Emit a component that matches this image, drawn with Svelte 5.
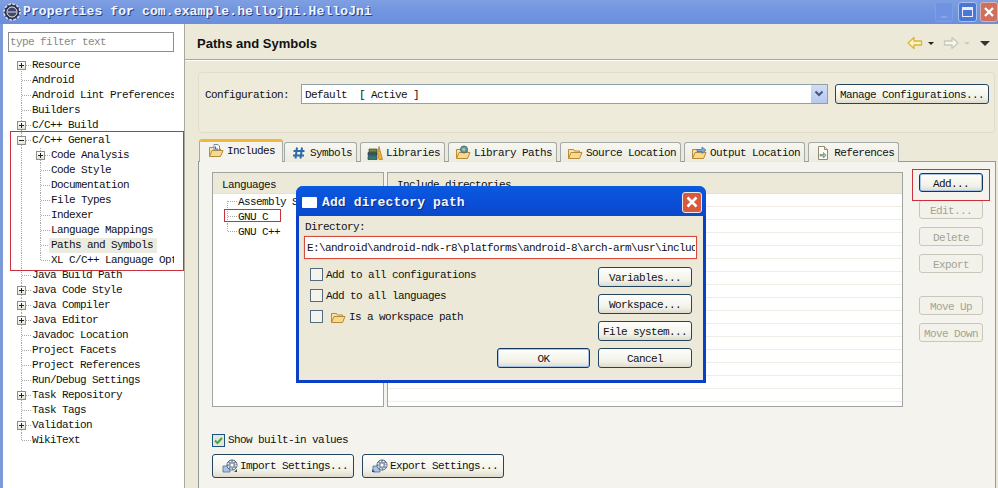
<script lang="ts">
	const tree = [
		{ label: 'Resource', level: 0, exp: '+', first: true },
		{ label: 'Android', level: 0 },
		{ label: 'Android Lint Preferences', level: 0 },
		{ label: 'Builders', level: 0 },
		{ label: 'C/C++ Build', level: 0, exp: '+' },
		{ label: 'C/C++ General', level: 0, exp: '-' },
		{ label: 'Code Analysis', level: 1, exp: '+' },
		{ label: 'Code Style', level: 1 },
		{ label: 'Documentation', level: 1 },
		{ label: 'File Types', level: 1 },
		{ label: 'Indexer', level: 1 },
		{ label: 'Language Mappings', level: 1 },
		{ label: 'Paths and Symbols', level: 1, selected: true },
		{ label: 'XL C/C++ Language Options', level: 1, last: true },
		{ label: 'Java Build Path', level: 0 },
		{ label: 'Java Code Style', level: 0, exp: '+' },
		{ label: 'Java Compiler', level: 0, exp: '+' },
		{ label: 'Java Editor', level: 0, exp: '+' },
		{ label: 'Javadoc Location', level: 0 },
		{ label: 'Project Facets', level: 0 },
		{ label: 'Project References', level: 0 },
		{ label: 'Run/Debug Settings', level: 0 },
		{ label: 'Task Repository', level: 0, exp: '+' },
		{ label: 'Task Tags', level: 0 },
		{ label: 'Validation', level: 0, exp: '+' },
		{ label: 'WikiText', level: 0, last: true }
	];

	const tabs = [
		{ label: 'Includes', icon: 'folder', active: true },
		{ label: 'Symbols', icon: 'hash' },
		{ label: 'Libraries', icon: 'books' },
		{ label: 'Library Paths', icon: 'globe' },
		{ label: 'Source Location', icon: 'open' },
		{ label: 'Output Location', icon: 'out' },
		{ label: 'References', icon: 'doc' }
	];

	const languages = ['Assembly Source', 'GNU C', 'GNU C++'];
</script>

{#snippet folder(kind)}
	<svg class="ico" viewBox="0 0 16 16" width="16" height="16">
		<path d="M1.5 13.5V4.5h5l1 1.5h5v2" fill="#f7e3a6" stroke="#b58a3a" />
		<path d="M1.5 13.5l2.5-6h11l-2.5 6z" fill="#f9d98a" stroke="#b58a3a" stroke-linejoin="round" />
		{#if kind === 'folder'}
			<path d="M6 1.5h4l1.5 1.5v4H6z" fill="#fff" stroke="#7d8aa5" />
			<path d="M7.5 6V3.5M7.5 6H10" stroke="#4a5f8a" />
		{:else if kind === 'globe'}
			<circle cx="9" cy="4.5" r="3.5" fill="#6f9a8f" stroke="#4f6a78" />
			<path d="M7 3.5h3v2H8z" fill="#b9d6a8" />
		{:else if kind === 'out'}
			<path d="M6 4.5h5V2l4 3.2-4 3.2V6.5H6z" fill="#7fb0df" stroke="#41709e" stroke-width=".8" />
		{/if}
	</svg>
{/snippet}

{#snippet tabIcon(name)}
	{#if name === 'hash'}
		<svg class="ico" viewBox="0 0 16 16" width="16" height="16">
			<path d="M6 2.5L4.500 13.500M11 2.500L9.500 13.500M2.500 6h11M2 10.500h11" stroke="#2d6aa8" stroke-width="2" fill="none" />
		</svg>
	{:else if name === 'books'}
		<svg class="ico" viewBox="0 0 16 16" width="16" height="16">
			<path d="M1 11.500h9v3H1z" fill="#2f7f6f" stroke="#23404a" stroke-width=".7" />
			<path d="M1 7.500h9v3H1z" fill="#35506e" stroke="#23404a" stroke-width=".7" />
			<path d="M2 4h8v3H2z" fill="#6f8f3a" stroke="#3a4a20" stroke-width=".7" />
			<path d="M12 1.500l3.500 13h-3.500l-1.500-6z" fill="#eeb23c" stroke="#a8761e" stroke-width=".7" />
		</svg>
	{:else if name === 'doc'}
		<svg class="ico" viewBox="0 0 16 16" width="16" height="16">
			<path d="M3.500 1.500h6l3 3v10h-9z" fill="#fdfbf2" stroke="#8f8a70" />
			<path d="M9.500 1.500v3h3" fill="#e8e2c8" stroke="#8f8a70" />
			<path d="M5 9.500h3.500V7.500L11 10.200 8.500 13v-2H5z" fill="#9fc4a0" stroke="#5e8a78" stroke-width=".7" />
		</svg>
	{:else}
		{@render folder(name)}
	{/if}
{/snippet}

{#snippet gearDoc(out)}
	<svg class="ico" viewBox="0 0 18 16" width="18" height="16">
		<path d="M2 8h7v6H2z" fill="#a9c4e6" stroke="#4a6fa0" stroke-width=".8" />
		<circle cx="11" cy="7" r="5" fill="#8a97ad" stroke="#47566e" />
		<circle cx="11" cy="7" r="4" fill="none" stroke="#e8ecf2" stroke-width="1.4" stroke-dasharray="1.6 1.6" />
		<circle cx="11" cy="7" r="1.5" fill="#fff" />
		{#if out}
			<path d="M1 11l3 3H1z" fill="#3a4e6a" />
		{:else}
			<path d="M16 11v3h-3z" fill="#3a4e6a" />
		{/if}
	</svg>
{/snippet}

<div class="win">
	<header class="titlebar">
		<svg class="app" viewBox="0 0 18 18" width="18" height="18">
			<circle cx="9" cy="9" r="8" fill="#2f3350" stroke="#d8dce8" stroke-width="1.6" stroke-dasharray="2.6 1.6" />
			<circle cx="9" cy="9" r="5" fill="#41466a" stroke="#e8eaf2" />
			<path d="M5 9h8" stroke="#d9dbe8" />
		</svg>
		<span class="title">Properties for com.example.hellojni.HelloJni</span>
		<span class="wbtn min"><i></i></span>
		<span class="wbtn max"><i></i></span>
		<span class="wbtn close">
			<svg viewBox="0 0 18 18" width="18" height="18"><path d="M4.500 4.500l9 9M13.500 4.500l-9 9" stroke="#fff" stroke-width="2.600" /></svg>
		</span>
	</header>

	<div class="body">
		<aside class="nav">
			<div class="filter">type filter text</div>
			<div class="tree">
				{#each tree as item}
					<div class="row">
						{#if item.level === 1}
							<span class="guide pass"></span>
						{/if}
						<span class="guide branch" class:last={item.last} class:first={item.first}>
							{#if item.exp}
								<span class="exp" class:plus={item.exp === '+'}></span>
							{/if}
						</span>
						<span class="label" class:selected={item.selected}>{item.label}</span>
					</div>
				{/each}
			</div>
		</aside>

		<main class="page">
			<div class="page-head">
				<h1>Paths and Symbols</h1>
				<div class="arrows">
					<svg viewBox="0 0 16 14" width="16" height="14"><path d="M1 7l6-5.500V5h7.500v4H7v3.500z" fill="#fdf3c0" stroke="#d9b53c" stroke-width="1.300" stroke-linejoin="round" /></svg>
					<span class="drop"></span>
					<svg class="fwd" viewBox="0 0 16 14" width="16" height="14"><path d="M15 7L9 1.500V5H1.500v4H9v3.500z" fill="#f6f5ee" stroke="#c9c8bc" stroke-width="1.300" stroke-linejoin="round" /></svg>
					<span class="drop dim"></span>
					<span class="drop big"></span>
				</div>
			</div>

			<section class="config">
				<span class="cfg-label">Configuration:</span>
				<div class="combo">
					<span class="combo-text">Default  [ Active ]</span>
					<span class="combo-btn">
						<svg viewBox="0 0 10 8" width="10" height="8"><path d="M1.500 1.500L5 5l3.500-3.500" fill="none" stroke="#44587e" stroke-width="2" /></svg>
					</span>
				</div>
				<button class="btn manage">Manage Configurations...</button>
			</section>

			<div class="tabs">
				{#each tabs as tab}
					<div class="tab" class:active={tab.active}>
						{@render tabIcon(tab.icon)}
						<span>{tab.label}</span>
					</div>
				{/each}
			</div>

			<section class="tab-body">
				<div class="columns">
					<div class="panel langs">
						<div class="panel-head">Languages</div>
						<div class="lang-list">
							{#each languages as lang, i}
								<div class="lang-row">
									<span class="guide branch" class:last={i === languages.length - 1} class:first={i === 0}></span>
									<span>{lang}</span>
								</div>
							{/each}
						</div>
					</div>
					<div class="panel incs">
						<div class="panel-head">Include directories</div>
						<div class="inc-lines"></div>
					</div>
					<div class="side">
						<button class="btn default">Add...</button>
						<button class="btn" disabled>Edit...</button>
						<button class="btn" disabled>Delete</button>
						<button class="btn" disabled>Export</button>
						<button class="btn gap" disabled>Move Up</button>
						<button class="btn" disabled>Move Down</button>
					</div>
				</div>

				<label class="builtin">
					<span class="check on">
						<svg viewBox="0 0 11 11" width="11" height="11"><path d="M2 5.500l2.500 2.500L9 3" fill="none" stroke="#3fa83f" stroke-width="2" /></svg>
					</span>
					Show built-in values
				</label>
				<div class="settings">
					<button class="btn setting">{@render gearDoc(false)}Import Settings...</button>
					<button class="btn setting">{@render gearDoc(true)}Export Settings...</button>
				</div>
			</section>
		</main>
	</div>

	<div class="dialog">
		<div class="dlg-title">
			<span class="dlg-ico"></span>
			<span class="title">Add directory path</span>
			<span class="wbtn close dlg-close">
				<svg viewBox="0 0 18 18" width="18" height="18"><path d="M4.500 4.500l9 9M13.500 4.500l-9 9" stroke="#fff" stroke-width="2.600" /></svg>
			</span>
		</div>
		<div class="dlg-body">
			<div class="dlg-label">Directory:</div>
			<div class="dlg-input"><span>E:\android\android-ndk-r8\platforms\android-8\arch-arm\usr\include</span></div>
			<div class="dlg-grid">
				<div class="dlg-checks">
					<div class="dlg-check"><span class="check"></span>Add to all configurations</div>
					<div class="dlg-check"><span class="check"></span>Add to all languages</div>
					<div class="dlg-check">
						<span class="check"></span>
						<span class="dlg-folder">{@render folder('open')}</span>
						Is a workspace path
					</div>
				</div>
				<div class="dlg-btns">
					<button class="btn">Variables...</button>
					<button class="btn">Workspace...</button>
					<button class="btn">File system...</button>
				</div>
			</div>
			<div class="dlg-foot">
				<button class="btn default ok">OK</button>
				<button class="btn cancel">Cancel</button>
			</div>
		</div>
	</div>

	<!-- red boxes somebody drew on the screenshot -->
	<span class="mark mark-tree"></span>
	<span class="mark mark-gnu"></span>
	<span class="mark mark-add"></span>
</div>

<style>
	:global(body) {
		margin: 0;
	}

	.win {
		position: relative;
		width: 998px;
		height: 488px;
		overflow: hidden;
		display: flex;
		flex-direction: column;
		background: #ece9d8;
		font: 11px/14px 'Liberation Mono', monospace;
		letter-spacing: -0.6px;
		color: #111;
	}

	.titlebar {
		flex: none;
		height: 24px;
		display: flex;
		align-items: center;
		padding-left: 3px;
		background: linear-gradient(#7f9fe2, #7195e0 45%, #6b8fdb);
	}

	.app {
		margin-right: 2px;
	}

	.title {
		font-size: 13px;
		font-weight: bold;
		letter-spacing: 0.13px;
		color: #f2f5fc;
		text-shadow: 1px 1px 0 #24408a;
		white-space: nowrap;
	}

	.titlebar .title {
		flex: 1;
	}

	.wbtn {
		width: 18px;
		height: 20px;
		border-radius: 3px;
		display: flex;
		align-items: center;
		justify-content: center;
		margin-right: 3px;
		box-sizing: border-box;
		border: 1px solid #a9bfec;
	}

	.min {
		background: #6f93e0;
		border-color: #7d9fe6;
		margin-right: 5px;
	}

	.min i {
		width: 6px;
		height: 2px;
		background: #86a4e4;
		margin-top: 10px;
	}

	.max {
		width: 19px;
		background: #4a76d6;
	}

	.max i {
		width: 11px;
		height: 10px;
		box-sizing: border-box;
		border: 1px solid #e8eefb;
		border-top-width: 3px;
	}

	.close {
		background: #cf6f5e;
		margin-right: 0;
		border-color: #d8b0b0;
	}

	.body {
		flex: 1;
		min-height: 0;
		display: flex;
	}

	.nav {
		flex: none;
		width: 182px;
		margin-left: 3px;
		box-sizing: border-box;
		padding: 8px 0 0 5px;
		background: #fff;
		border-right: 1px solid #a9a899;
		box-shadow: -3px 0 0 #7d9ad8;
	}

	.filter {
		width: 166px;
		height: 20px;
		box-sizing: border-box;
		border: 1px solid #8a8f8c;
		padding: 2px 1px;
		color: #888;
	}

	.tree {
		margin-top: 6px;
		margin-left: 9px;
		overflow: hidden;
		width: 157px;
	}

	.row {
		height: 15px;
		display: flex;
		align-items: center;
		white-space: nowrap;
	}

	.guide {
		flex: none;
		width: 15px;
		height: 100%;
		display: flex;
		align-items: center;
		background-repeat: no-repeat;
	}

	.pass {
		width: 19px;
		background-image: repeating-linear-gradient(#a8a8a8 0 1px, transparent 1px 2px);
		background-size: 1px 100%;
		background-position: 4px 0;
	}

	.branch {
		background-image:
			repeating-linear-gradient(#a8a8a8 0 1px, transparent 1px 2px),
			repeating-linear-gradient(90deg, #a8a8a8 0 1px, transparent 1px 2px);
		background-size:
			1px 100%,
			10px 1px;
		background-position:
			4px 0,
			5px 7px;
	}

	.branch.last {
		background-size:
			1px 8px,
			10px 1px;
	}

	.branch.first {
		background-size:
			1px 8px,
			10px 1px;
		background-position:
			4px 7px,
			5px 7px;
	}

	.exp {
		width: 9px;
		height: 9px;
		box-sizing: border-box;
		border: 1px solid #8a8f8c;
		background:
			linear-gradient(#222, #222) center / 5px 1px no-repeat,
			linear-gradient(#fff, #e6e3d4);
	}

	.exp.plus {
		background:
			linear-gradient(#222, #222) center / 5px 1px no-repeat,
			linear-gradient(#222, #222) center / 1px 5px no-repeat,
			linear-gradient(#fff, #e6e3d4);
	}

	.label {
		line-height: 15px;
	}

	.label.selected {
		background: #ecebe0;
		margin-left: -2px;
		padding: 0 4px 0 2px;
	}

	.page {
		flex: 1;
		min-width: 0;
		display: flex;
		flex-direction: column;
	}

	.page-head {
		flex: none;
		height: 36px;
		box-sizing: border-box;
		display: flex;
		align-items: center;
		justify-content: space-between;
		padding: 3px 0 0 12px;
		border-bottom: 1px solid #aca899;
		box-shadow: 0 1px 0 #fff;
	}

	h1 {
		margin: 0;
		font: bold 13px 'Liberation Sans', sans-serif;
		letter-spacing: 0;
		color: #111;
	}

	.arrows {
		display: flex;
		align-items: center;
		gap: 5px;
		padding-right: 8px;
	}

	.drop {
		border-top: 3px solid #222;
		border-left: 3px solid transparent;
		border-right: 3px solid transparent;
	}

	.fwd {
		margin-left: 4px;
	}

	.drop.dim {
		border-top-color: #cfcdbf;
	}

	.drop.big {
		margin-left: 5px;
		border-top: 5px solid #333;
		border-left: 5px solid transparent;
		border-right: 5px solid transparent;
	}

	.config {
		flex: none;
		height: 61px;
		box-sizing: border-box;
		margin: 12px 3px 0 13px;
		padding: 11px 0 0 6px;
		display: flex;
		align-items: flex-start;
		border: 1px solid #e0ddcb;
		border-radius: 4px;
		background: #eeebdb;
	}

	.cfg-label {
		width: 96px;
		line-height: 22px;
	}

	.combo {
		width: 527px;
		height: 20px;
		box-sizing: border-box;
		display: flex;
		align-items: center;
		justify-content: space-between;
		background: #fff;
		border: 1px solid #8ea0a8;
		padding: 0 0 0 3px;
		margin-right: 7px;
	}

	.combo-text {
		white-space: pre;
		padding-top: 2px;
	}

	.combo-btn {
		width: 16px;
		height: 18px;
		display: flex;
		align-items: center;
		justify-content: center;
		background: linear-gradient(#d2ddf7, #b6c8ef);
	}

	.btn {
		height: 20px;
		box-sizing: border-box;
		padding: 0;
		font: inherit;
		letter-spacing: inherit;
		color: #111;
		border: 1px solid #24455f;
		border-radius: 3px;
		background: linear-gradient(#fefefc, #f2f1e8 70%, #dedbcc);
	}

	.btn:disabled {
		color: #a4a392;
		border-color: #c9c7ba;
		background: #f3f2ea;
	}

	.btn.default {
		border-color: #12365c;
		box-shadow: inset 0 0 0 1px #a8c4e8;
	}

	.manage {
		width: 154px;
		padding-top: 2px;
	}

	.tabs {
		flex: none;
		display: flex;
		align-items: flex-end;
		gap: 3px;
		height: 23px;
		margin: 6px 0 -1px 14px;
		position: relative;
		z-index: 1;
	}

	.tab {
		height: 20px;
		box-sizing: border-box;
		display: flex;
		align-items: center;
		gap: 3px;
		padding: 0 4px 0 6px;
		background: linear-gradient(#f7f6f0, #ecebe0);
		border: 1px solid #a5a9a8;
		border-bottom: none;
		border-radius: 3px 3px 0 0;
		white-space: nowrap;
	}

	.tab.active {
		height: 23px;
		padding: 0 7px 2px 8px;
		margin-right: -2px;
		background: #f4f3ee;
		border-top: 3px solid #f0b83c;
	}

	.ico {
		flex: none;
	}

	.tab-body {
		flex: 1;
		min-height: 0;
		box-sizing: border-box;
		margin: 0 2px 0 13px;
		padding: 10px 0 0 13px;
		background: #f4f3ee;
		border: 1px solid #919b9c;
		border-bottom: none;
	}

	.columns {
		display: flex;
		height: 235px;
		gap: 3px;
	}

	.panel {
		box-sizing: border-box;
		height: 100%;
		display: flex;
		flex-direction: column;
		background: #fff;
		border: 1px solid #a0a49f;
	}

	.langs {
		width: 172px;
	}

	.incs {
		width: 516px;
	}

	.panel-head {
		flex: none;
		height: 20px;
		line-height: 24px;
		padding-left: 9px;
		background: #ece9d8;
		border-bottom: 1px solid #e4e1cf;
	}

	.lang-list {
		padding: 0 0 0 10px;
	}

	.lang-row {
		height: 15px;
		display: flex;
		align-items: center;
		white-space: nowrap;
	}

	.inc-lines {
		flex: 1;
		background: repeating-linear-gradient(#fff 0 12px, #efede6 12px 13px);
	}

	.side {
		display: flex;
		flex-direction: column;
		gap: 8px;
		width: 64px;
		margin-left: 13px;
		padding-top: 1px;
	}

	.side .btn {
		height: 19px;
		flex: none;
		padding-top: 2px;
	}

	.side .gap {
		margin-top: 15px;
	}

	.builtin {
		display: flex;
		align-items: center;
		gap: 3px;
		margin-top: 26px;
		height: 14px;
	}

	.check {
		flex: none;
		width: 13px;
		height: 13px;
		box-sizing: border-box;
		border: 1px solid #566a7e;
		background: #fff;
		display: inline-flex;
	}

	.check.on {
		background: #e8e6da;
		border-color: #1c5180;
	}

	.settings {
		display: flex;
		gap: 8px;
		margin-top: 7px;
	}

	.setting {
		width: 142px;
		height: 24px;
		display: flex;
		align-items: center;
		justify-content: center;
		gap: 1px;
		padding-left: 3px;
	}

	.dialog {
		position: absolute;
		left: 296px;
		top: 186px;
		width: 410px;
		height: 197px;
		box-sizing: border-box;
		display: flex;
		flex-direction: column;
		border: 3px solid #0a3fc8;
		border-top: none;
		border-radius: 7px 7px 0 0;
		background: #ece9d8;
	}

	.dlg-title {
		flex: none;
		height: 30px;
		box-sizing: border-box;
		margin: 0 -3px;
		padding: 2px 4px 0 6px;
		display: flex;
		align-items: center;
		gap: 5px;
		border-radius: 7px 7px 0 0;
		background: linear-gradient(#0a5ae0, #0a4fd8 50%, #0a48cc);
	}

	.dlg-title .title {
		flex: 1;
		padding-top: 2px;
		text-shadow: 1px 1px 0 #0a2a80;
	}

	.dlg-ico {
		width: 15px;
		height: 11px;
		background: #fff;
		border-radius: 1px;
	}

	.dlg-close {
		width: 20px;
		height: 21px;
		background: #d8593c;
		border-color: #f0e8e8;
	}

	.dlg-body {
		flex: 1;
		padding: 4px 11px 0 6px;
	}

	.dlg-label {
		height: 14px;
	}

	.dlg-input {
		height: 23px;
		width: 393px;
		margin: 2px 0 0 -1px;
		box-sizing: border-box;
		display: flex;
		align-items: center;
		padding: 0 1px 0 2px;
		overflow: hidden;
		white-space: nowrap;
		background: #fff;
		border: 1px solid #d84a3c;
		outline: 1px solid #f6d4c8;
	}

	.dlg-input span {
		overflow: hidden;
	}

	.dlg-grid {
		display: flex;
		justify-content: space-between;
		margin-top: 8px;
	}

	.dlg-checks {
		padding-left: 5px;
	}

	.dlg-check {
		height: 21px;
		display: flex;
		align-items: center;
		gap: 3px;
		white-space: nowrap;
		margin-top: -3px;
		margin-bottom: 3px;
	}

	.dlg-check .check {
		background: #f4f3ee;
	}

	.dlg-folder {
		display: flex;
		margin: 0 0 0 4px;
	}

	.dlg-btns {
		display: flex;
		flex-direction: column;
		gap: 7px;
		width: 94px;
	}

	.dlg-btns .btn,
	.dlg-foot .btn {
		padding-top: 2px;
	}

	.dlg-foot {
		display: flex;
		justify-content: flex-end;
		gap: 8px;
		margin-top: 7px;
	}

	.ok {
		width: 93px;
	}

	.cancel {
		width: 94px;
	}

	.mark {
		position: absolute;
		box-sizing: border-box;
		border: 1px solid #c8323c;
	}

	.mark-tree {
		left: 10px;
		top: 131px;
		width: 174px;
		height: 140px;
	}

	.mark-gnu {
		left: 224px;
		top: 209px;
		width: 57px;
		height: 13px;
	}

	.mark-add {
		left: 912px;
		top: 169px;
		width: 78px;
		height: 32px;
	}
</style>
